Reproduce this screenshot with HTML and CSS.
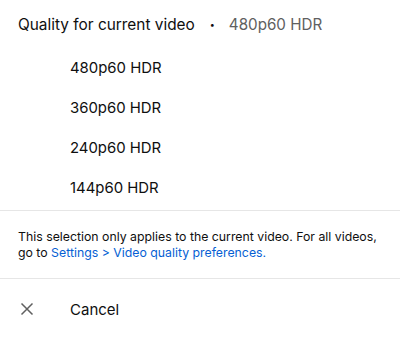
FILE: index.html
```html
<!DOCTYPE html>
<html lang="en">
<head>
<meta charset="utf-8">
<link rel="stylesheet" href="styles.css">
</head>
<body>
<div class="sheet">
  <div class="header">
    <span class="title">Quality for current video</span>
    <span class="dot">•</span>
    <span class="current">480p60 HDR</span>
  </div>
  <ul class="options">
    <li class="option">480p60 HDR</li>
    <li class="option">360p60 HDR</li>
    <li class="option">240p60 HDR</li>
    <li class="option">144p60 HDR</li>
  </ul>
  <div class="note">
    This selection only applies to the current video. For all videos, go to <a class="link" href="#">Settings &gt; Video quality preferences.</a>
  </div>
  <div class="cancel">
    <span class="cancel-icon">
      <svg width="14" height="14" viewBox="0 0 14 14"><path d="M1.5 1.5 L12.5 12.5 M12.5 1.5 L1.5 12.5" stroke="#606060" stroke-width="1.5" fill="none"/></svg>
    </span>
    <span class="cancel-label">Cancel</span>
  </div>
</div>
</body>
</html>
```
FILE: styles.css
```css
* { box-sizing: border-box; }
html, body { margin: 0; padding: 0; background: #fff; }
body {
  font-family: Inter, "Liberation Sans", Arial, sans-serif;
  color: #0f0f0f;
  width: 400px;
  height: 337px;
  overflow: hidden;
}
.header {
  height: 48px;
  display: flex;
  align-items: center;
  padding-left: 18px;
  font-size: 15.4px;
}
.dot {
  font-size: 9px;
  margin: 0 14px 0 15px;
  color: #0f0f0f;
}
.current { color: #606060; font-size: 15.2px; }
.options {
  list-style: none;
  margin: 0;
  padding: 0 0 2px 0;
  border-bottom: 1px solid #e6e6e6;
}
.option {
  height: 40px;
  display: flex;
  align-items: center;
  padding-left: 70px;
  font-size: 14.9px;
}
.note {
  height: 68px;
  padding: 18px 18px 0 18px;
  font-size: 12.3px;
  line-height: 16px;
  color: #0f0f0f;
  border-bottom: 1px solid #e6e6e6;
}
.link { color: #065fd4; text-decoration: none; }
.cancel {
  height: 60px;
  display: flex;
  align-items: center;
}
.cancel-icon {
  width: 70px;
  padding-left: 20px;
  display: flex;
  align-items: center;
}
.cancel-label { font-size: 15px; }
```
